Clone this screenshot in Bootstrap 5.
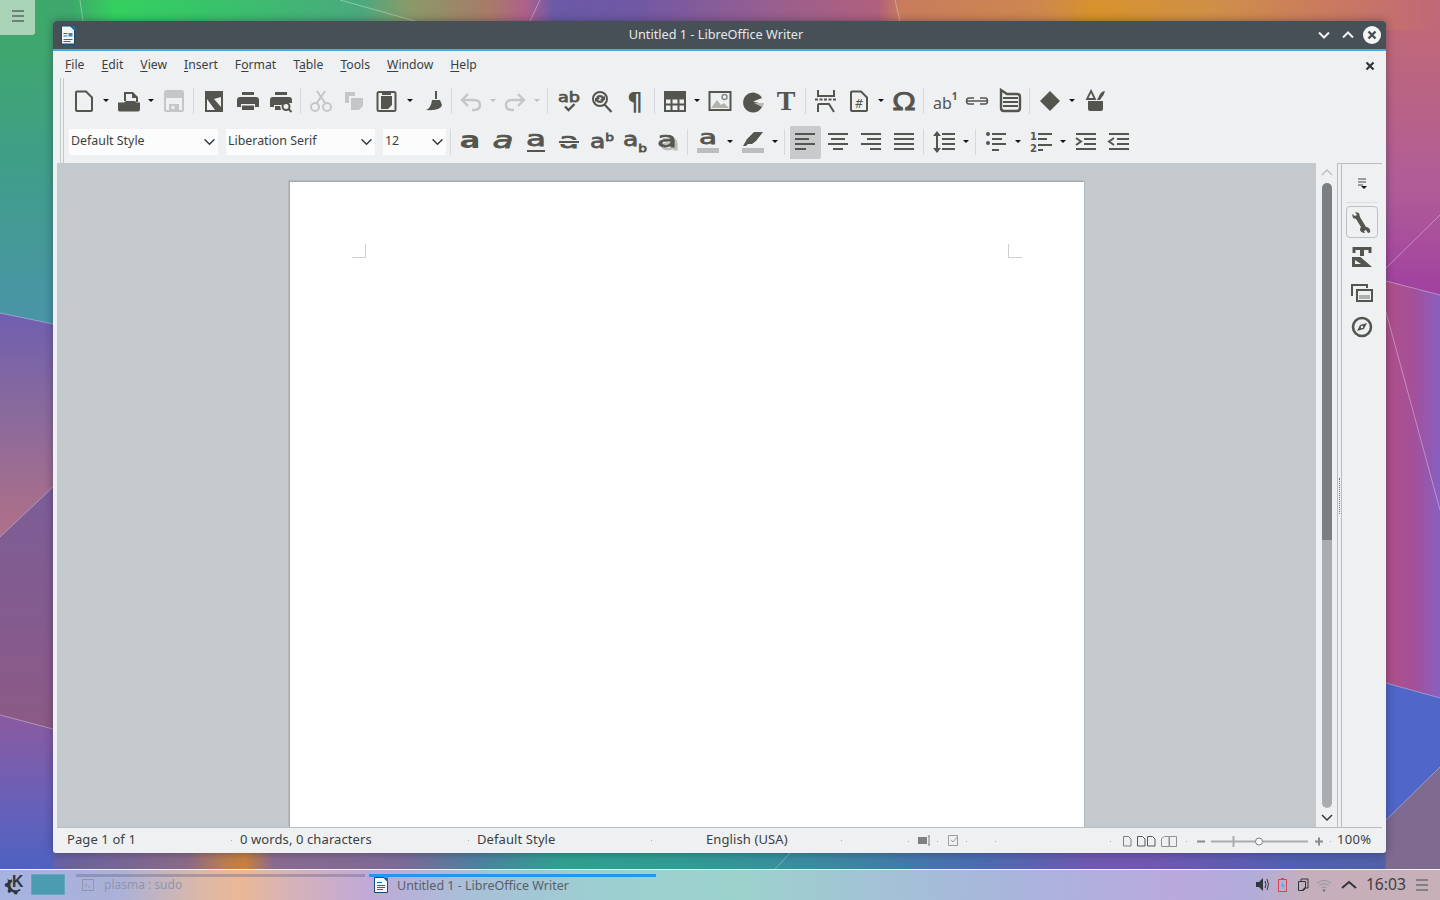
<!DOCTYPE html>
<html lang="en">
<head>
<meta charset="utf-8">
<title>Untitled 1 - LibreOffice Writer</title>
<link rel="stylesheet" href="https://cdn.jsdelivr.net/npm/bootstrap@5.3.0/dist/css/bootstrap.min.css">
<style>
html,body{margin:0;width:1440px;height:900px;overflow:hidden}
body{font-family:"Noto Sans","Open Sans",sans-serif;font-size:13px;color:#3a3f44;line-height:1.2;background:#6a60a0}
.desk{height:869px}
.wall{width:1440px;height:869px}
.side-tab{width:35px;height:35px;background:#a9d4b7;border-bottom-right-radius:3px;padding:10px 11px 0 12px;gap:3px}
.side-tab span{height:2px;background:#6f8078;display:block}
.lo-win{left:53px;top:21px;width:1333px;height:832px;background:#eff0f1;border-radius:3px;box-shadow:0 0 9px rgba(30,30,50,.45);overflow:hidden}
.titlebar{height:30px;background:#474f57;border-bottom:2px solid #3daee9;color:#e6e8e9;flex:none;font-size:12.7px}
.t-left{width:67px;padding-left:6px}
.t-right{width:74px}
.menu{height:27px;padding:2px 0 0 12px;gap:17px;flex:none;font-size:12.2px}
.menu span{color:#3a3f44}
.menu u{text-underline-offset:2px;text-decoration-thickness:1px}
.doc-x{margin-left:auto;margin-right:11px}
.tools{margin-left:7px;height:85px;flex:none;border-left:4px double #c6c8ca}
.r1{height:46px;padding-left:3px}
.r2{height:36px;padding-left:5px}
.b{width:33px;height:33px;flex:none}
.i{width:24px;height:24px;display:block;color:#55554f;fill:currentColor;overflow:visible}
.off{color:#c4c6c7}
.d{width:12px;height:10px;flex:none;padding-top:3px}
.d::after{content:"";width:0;height:0;margin:0 auto;border:3px solid transparent;border-top-color:#111;border-bottom:0;display:block}
.d.off::after{border-top-color:#bfc1c2}
.d11{width:11px}.d13{width:13px}
.s{width:7px;height:26px;flex:none}
.s::after{content:"";width:1px;height:100%;background:#d6d8d9;display:block}
.s5{width:5px}.s9{width:9px}
.g1{margin-left:1px}
.active-b{background:#c8cacc;background-clip:padding-box;border-left:2px solid transparent;border-radius:2px;padding-right:1px}
select.form-select.cb{height:26px;border:0;border-radius:0;background-color:#fcfcfc;padding:0 20px 1px 2px;font-size:12.4px;color:#3a3f44;background-position:right 1px center;background-size:15px 12px;box-shadow:none;flex:none;font-family:"Noto Sans",sans-serif}
.cb-l{width:149px;margin-right:8px}
.cb-s{width:63px;margin-right:4px}
.sep-a{width:1px;height:26px;background:#d6d8d9;margin-right:2px;flex:none}
.main{margin:0 4px 0 4px;min-height:0}
.area{background:#c3c9cd;padding-top:18px;overflow:hidden;min-width:0}
.page{width:795px;background:#fff;border:solid #a5aaad;border-width:1px 0 0 1px;box-shadow:-1px -1px 0 #b4b9bc,1px 0 0 #b4b9bc;padding:62px 62px 0 62px}
.pgm{width:14px;height:14px;border:0 solid #cfcfcf}
.pgm-l{border-width:0 1px 1px 0}
.pgm-r{border-width:0 0 1px 1px}
.vscroll{width:21px;padding-top:6px;flex:none}
.thumb{width:10px;height:357px;background:#7a7f84;border-radius:5px 5px 0 0;flex:none}
.groove{width:10px;background:#a9adb0;border-radius:0 0 5px 5px;flex:1 1 auto;min-height:0}
.sidebar{width:45px;border-top:1px solid #b9bdc0;border-left:1px solid #b9bdc0;flex:none}
.grip{width:4px;border-right:1px solid #b9bdc0;flex:none}
.grip span{display:block;height:36px;border-left:1px dotted #6f7477;margin-left:1px}
.tabs{padding-top:3px;width:40px}
.tb{width:32px;height:32px;flex:none;margin-bottom:3px}
.tb-on{border:1px solid #bcc0c2;border-radius:4px}
.tb-sep{width:32px;border-top:1px solid #dcdee0;margin:3px 0}
.status{height:26px;flex:none;margin:0 4px;border-top:1px solid #b9bdc0;padding-left:10px}
.f{flex:none}
.f1{width:165px;margin-right:8px}.f2{width:229px;margin-right:8px}.f3{width:175px;margin-right:54px}.f4{width:136px;margin-right:66px}
.f span{letter-spacing:.1px;margin-bottom:2px}
.f em{width:1px;height:1px;background:#a8acae;display:block}
.zoomtxt{margin:0 0 2px 2px;letter-spacing:.3px}
.panel{height:31px;border-top:1px solid #f6f3f6;background:linear-gradient(90deg,#a6b3e0 0,#abb1d8 120px,#dcb8a8 200px,#eab896 240px,#d6b3b8 290px,#bfa9d8 370px,#a8c0d8 470px,#9bd0d0 620px,#9cd2cc 740px,#a3c2d6 880px,#a8b6dc 1000px,#b9a9dc 1170px,#b2acda 1250px,#c6afbb 1310px,#c8b0b8 1440px);padding-left:4px}
.kde{width:21px;height:21px;margin-right:6px;display:block;flex:none}
.kde,.tray{color:#31363b;fill:currentColor}
.pager{width:34px;height:21px;background:#4b9cb0;border:1px solid #62a9bb;margin-right:11px;flex:none}
.task{height:30px;width:289px;padding-top:1px;flex:none;position:relative}
.task::before{content:"";display:block;height:3px;margin-top:3px;background:rgba(110,105,140,.42)}
.task-on::before{background:#2196f3}
.task-1{margin-right:4px;width:289px;color:#8f97ab;font-size:12px}
.task-2{width:287px;color:#596067;font-size:12.5px}
.task-body{height:16px;gap:7px}
.task-1 .task-body{padding-left:6px;gap:10px}
.task-1 .task-body span{padding-top:1px}
.task-2 .task-body{padding-left:5px;gap:9px}
.clock{font-size:15.7px;color:#3a3f44;margin:0 10px 0 5px;line-height:1}
.tray{display:block;flex:none}
.tray-end{margin-right:12px}
.rt{font-family:"DejaVu Sans",sans-serif;font-weight:700;fill:currentColor}
.rm{font-family:"DejaVu Sans",sans-serif;font-weight:400;fill:currentColor;stroke:currentColor;stroke-width:.75}
.rn{font-family:"Noto Sans",sans-serif;fill:currentColor}
.shd{filter:drop-shadow(3px 3px 0 #bcbdbb)}
</style>
</head>
<body class="d-flex flex-column">
<div class="desk position-relative overflow-hidden flex-shrink-0">
  <svg class="wall position-absolute top-0 start-0" viewBox="0 0 1440 869" aria-hidden="true">
    <defs>
      <linearGradient id="gt" gradientUnits="userSpaceOnUse" x1="0" y1="0" x2="1440" y2="0">
        <stop offset="0" stop-color="#3fa86c"/><stop offset=".05" stop-color="#3ea86c"/><stop offset=".08" stop-color="#35d05f"/><stop offset=".14" stop-color="#38c468"/><stop offset=".25" stop-color="#4aa97e"/><stop offset=".285" stop-color="#8a9a68"/><stop offset=".34" stop-color="#a87a68"/><stop offset=".365" stop-color="#b0608a"/><stop offset=".385" stop-color="#6a5aa8"/><stop offset=".44" stop-color="#7058a4"/><stop offset=".54" stop-color="#9a5f8e"/><stop offset=".61" stop-color="#b0607c"/><stop offset=".625" stop-color="#c87c5c"/><stop offset=".72" stop-color="#cd8750"/><stop offset=".76" stop-color="#d8922c"/><stop offset=".84" stop-color="#cf9048"/><stop offset=".91" stop-color="#cb7d5c"/><stop offset="1" stop-color="#c06878"/>
      </linearGradient>
      <linearGradient id="l1" x1="0" y1="0" x2="0" y2="1"><stop offset="0" stop-color="#3fa86c"/><stop offset=".45" stop-color="#3f9e88"/><stop offset="1" stop-color="#4a94a8"/></linearGradient>
      <linearGradient id="l2" x1="0" y1="0" x2="0" y2="1"><stop offset="0" stop-color="#6f5fb0"/><stop offset=".45" stop-color="#8a6a9c"/><stop offset="1" stop-color="#b07088"/></linearGradient>
      <linearGradient id="l3" x1="0" y1="0" x2="0" y2="1"><stop offset="0" stop-color="#7c5e98"/><stop offset="1" stop-color="#8c5a86"/></linearGradient>
      <linearGradient id="l4" x1="0" y1="0" x2="0" y2="1"><stop offset="0" stop-color="#8a5aa0"/><stop offset=".55" stop-color="#6a60b8"/><stop offset="1" stop-color="#4e62c0"/></linearGradient>
      <linearGradient id="r1" x1="0" y1="0" x2="0" y2="1"><stop offset="0" stop-color="#c06878"/><stop offset=".6" stop-color="#b05c98"/><stop offset="1" stop-color="#a040a0"/></linearGradient>
      <linearGradient id="r2" x1="0" y1="0" x2="1" y2="0"><stop offset="0" stop-color="#b0508a"/><stop offset=".5" stop-color="#a45098"/><stop offset="1" stop-color="#8860c0"/></linearGradient>
      <linearGradient id="gb" gradientUnits="userSpaceOnUse" x1="0" y1="0" x2="1440" y2="0">
        <stop offset="0" stop-color="#5060b8"/><stop offset=".05" stop-color="#6a62a0"/><stop offset=".13" stop-color="#8a6a88"/><stop offset=".155" stop-color="#b87c54"/><stop offset=".17" stop-color="#c8803c"/><stop offset=".19" stop-color="#8a6a90"/><stop offset=".28" stop-color="#7c6a98"/><stop offset=".33" stop-color="#4e80a0"/><stop offset=".39" stop-color="#30a090"/><stop offset=".47" stop-color="#309c94"/><stop offset=".56" stop-color="#3a8ca0"/><stop offset=".68" stop-color="#4a6cb0"/><stop offset=".76" stop-color="#7058b0"/><stop offset=".8" stop-color="#7058b0"/><stop offset=".9" stop-color="#5060b0"/><stop offset=".96" stop-color="#5060a8"/><stop offset=".97" stop-color="#80688a"/><stop offset="1" stop-color="#8a6a90"/>
      </linearGradient>
    </defs>
    <rect width="1440" height="60" fill="url(#gt)"/>
    <rect y="820" width="1440" height="49" fill="url(#gb)"/>
    <polygon points="0,30 53,30 53,324 0,313" fill="url(#l1)"/>
    <polygon points="0,313 53,324 53,487 0,537" fill="url(#l2)"/>
    <polygon points="0,537 53,487 53,729 0,715" fill="url(#l3)"/>
    <polygon points="0,715 53,729 53,869 0,869" fill="url(#l4)"/>
    <polygon points="1386,30 1440,30 1440,295 1386,281" fill="url(#r1)"/>
    <polygon points="1386,281 1440,295 1440,698 1386,683" fill="url(#r2)"/>
    <polygon points="1386,683 1440,698 1440,767 1386,820" fill="#5066c8"/>
    <polygon points="1386,820 1440,767 1440,869 1386,869" fill="#7f6a90"/>
    <g stroke="#fff" stroke-opacity=".35" fill="none">
      <path d="M0 313 53 324M0 537 53 487M0 715 53 729M1386 268 1440 215M1386 281 1440 295M1386 312 1440 510M1386 683 1440 698M1386 820 1440 767M340 0 415 21M80 0 83 21M895 0 900 21M530 21 540 0M790 853 775 869"/>
    </g>
  </svg>

  <div class="side-tab position-absolute top-0 start-0 d-flex flex-column"><span></span><span></span><span></span></div>

  <div class="lo-win position-absolute d-flex flex-column">
    <div class="titlebar d-flex align-items-center">
      <div class="t-left">
        <svg class="d-block" width="18" height="20" viewBox="0 0 18 20" aria-hidden="true"><path d="M2.5 1h9l4 4v14h-13z" fill="#f2f6f8" stroke="#124c72"/><path d="M11 1h5v5z" fill="#1b6a9c"/><path d="M4.500 8h4v1h-4zM4.500 10.500h4v1h-4zM4.500 14h9v1h-9zM4.500 16h7v1h-7z" fill="#1f6fa5"/><rect x="9.500" y="8" width="4" height="3.500" fill="#5d7d90"/></svg>
      </div>
      <div class="flex-grow-1 text-center">Untitled 1 - LibreOffice Writer</div>
      <div class="t-right d-flex align-items-center">
        <svg width="74" height="22" viewBox="-1 0 74 22" aria-hidden="true"><path d="M6 8.500 11 13.500 16 8.500" fill="none" stroke="#eff0f1" stroke-width="2"/><path d="M30 13.500 35 8.500 40 13.500" fill="none" stroke="#eff0f1" stroke-width="2"/><circle cx="59" cy="11" r="9" fill="#f4f5f5"/><path d="M55.500 7.500l7 7M62.500 7.500l-7 7" stroke="#474f57" stroke-width="2.400"/></svg>
      </div>
    </div>

    <div class="menu d-flex align-items-center">
      <span><u>F</u>ile</span><span><u>E</u>dit</span><span><u>V</u>iew</span><span><u>I</u>nsert</span><span>F<u>o</u>rmat</span><span>T<u>a</u>ble</span><span><u>T</u>ools</span><span><u>W</u>indow</span><span><u>H</u>elp</span>
      <svg class="doc-x" width="10" height="10" viewBox="0 0 10 10" aria-hidden="true"><path d="M1.500 1.500l7 7M8.500 1.500l-7 7" stroke="#31363b" stroke-width="2.200"/></svg>
    </div>

    <div class="tools">
      <div class="r1 d-flex align-items-center">
        <div class="b d-flex align-items-center justify-content-center"><svg class="i" viewBox="0 0 24 24"><path d="M4 3.500q0-1 1-1h9l6 6V21q0 1-1 1H5q-1 0-1-1z" fill="none" stroke="currentColor" stroke-width="2"/></svg></div>
        <div class="d"></div>
        <div class="b d-flex align-items-center justify-content-center"><svg class="i" viewBox="0 0 24 24"><path d="M7 12V3h9l5 5v5h-2V9h-4V5H9v7z"/><path d="M1 21V13.500h6l2-1.500h9l1.500 1.500H23V20q0 2.500-2 2.500H3Q1 22.500 1 21z"/></svg></div>
        <div class="d"></div>
        <div class="b d-flex align-items-center justify-content-center"><svg class="i off" viewBox="0 0 24 24"><path d="M3 3.500q0-1.500 1.500-1.500h15q1.500 0 1.500 1.500v17q0 1.500-1.500 1.500h-15Q3 22 3 20.500z" fill="none" stroke="currentColor" stroke-width="2"/><path d="M4 3h16v6H4zM7 15h10v7H7z"/><rect x="9.500" y="17" width="3" height="3" fill="#eff0f1"/></svg></div>
        <div class="s d-flex justify-content-center"></div>
        <div class="b d-flex align-items-center justify-content-center"><svg class="i" viewBox="0 0 24 24"><rect x="4" y="3" width="16" height="19" fill="none" stroke="currentColor" stroke-width="2"/><path d="M5 4h14v4L12 10l7 8v3h-6L5 10z"/></svg></div>
        <div class="b g1 d-flex align-items-center justify-content-center"><svg class="i" viewBox="0 0 24 24"><path d="M6 3h12v3H6zM1 11q0-3 3-3h16q3 0 3 3v7h-4v-3H5v3H1zM6 16.500h12V21H6z"/></svg></div>
        <div class="b d-flex align-items-center justify-content-center"><svg class="i" viewBox="0 0 24 24"><path d="M6 3h12v3H6zM1 11q0-3 3-3h16q3 0 3 3v3h-7l-4 2H5v2H1zM6 17h5l1 4H6z"/><circle cx="17" cy="17.500" r="3.500" fill="none" stroke="currentColor" stroke-width="2"/><path d="M19.500 20l3 3" stroke="currentColor" stroke-width="2"/></svg></div>
        <div class="s d-flex justify-content-center"></div>
        <div class="b d-flex align-items-center justify-content-center"><svg class="i off" viewBox="0 0 24 24"><circle cx="6" cy="18" r="4" fill="none" stroke="currentColor" stroke-width="2"/><circle cx="18" cy="18" r="4" fill="none" stroke="currentColor" stroke-width="2"/><path d="M7.500 14.500 16 2M16.500 14.500 8 2" stroke="currentColor" stroke-width="2" fill="none"/></svg></div>
        <div class="b d-flex align-items-center justify-content-center"><svg class="i off" viewBox="0 0 24 24"><path d="M3 3h10v4H7v7H3zM9 9h12v8l-4 4H9z"/></svg></div>
        <div class="b d-flex align-items-center justify-content-center"><svg class="i" viewBox="0 0 24 24"><path d="M7 3H4Q2.500 3 2.500 4.500v16Q2.500 22 4 22h15q1.500 0 1.500-1.500v-16Q20.500 3 19 3h-3" fill="none" stroke="currentColor" stroke-width="2"/><path d="M7 2h9v4H7zM6 7h11v9l-4 4H6z"/></svg></div>
        <div class="d d13"></div>
        <div class="b d-flex align-items-center justify-content-center"><svg class="i" viewBox="0 0 24 24"><path d="M14 2h2v8h-2zM11 11h8l2 5q-1 6-16 5 5-2 6-10z"/></svg></div>
        <div class="s s5 d-flex justify-content-center"></div>
        <div class="b d-flex align-items-center justify-content-center"><svg class="i off" viewBox="0 0 24 24"><path d="M9 5 3 11l6 6M3 11h12q6 0 6 5t-6 5h-2" fill="none" stroke="currentColor" stroke-width="2.400"/></svg></div>
        <div class="d d11 off"></div>
        <div class="b d-flex align-items-center justify-content-center"><svg class="i off" viewBox="0 0 24 24"><path d="M15 5l6 6-6 6M21 11H9q-6 0-6 5t6 5h2" fill="none" stroke="currentColor" stroke-width="2.400"/></svg></div>
        <div class="d off"></div>
        <div class="s s9 d-flex justify-content-center"></div>
        <div class="b d-flex align-items-center justify-content-center"><svg class="i" viewBox="0 0 24 24"><text class="rm" x="1" y="13" font-size="14" textLength="22" lengthAdjust="spacingAndGlyphs">ab</text><path d="M8 17.500l3.500 3.500 6-6" fill="none" stroke="currentColor" stroke-width="2.400"/></svg></div>
        <div class="b d-flex align-items-center justify-content-center"><svg class="i" viewBox="0 0 24 24"><circle cx="10" cy="10" r="7" fill="none" stroke="currentColor" stroke-width="2"/><path d="M14.500 15.500l7 7.500" stroke="currentColor" stroke-width="2.200"/><path d="M6 10q0-4 4-4 3 0 4 2l1-2v5h-5l2-2q-3-2-4 1zM14 10q0 4-4 4-3 0-4-2l-1 2V9h5l-2 2q3 2 4-1z"/></svg></div>
        <div class="b d-flex align-items-center justify-content-center"><svg class="i" viewBox="0 0 24 24"><text class="rt" x="12" y="21" font-size="24" text-anchor="middle">¶</text></svg></div>
        <div class="s d-flex justify-content-center"></div>
        <div class="b d-flex align-items-center justify-content-center"><svg class="i" viewBox="0 0 24 24"><path d="M2 3h20v19H2z" fill="none" stroke="currentColor" stroke-width="2"/><path d="M2 3h20v6H2z"/><path d="M8.500 3v19M15.500 3v19M2 9.500h20M2 15.500h20" stroke="currentColor" stroke-width="2"/></svg></div>
        <div class="d"></div>
        <div class="b d-flex align-items-center justify-content-center"><svg class="i" viewBox="0 0 24 24"><rect x="1.500" y="3" width="21" height="18" fill="none" stroke="currentColor" stroke-width="2"/><circle cx="16.500" cy="8" r="2.500" fill="none" stroke="#8b8b86" stroke-width="1.500"/><path d="M3 19l6-8 4 5 3-2 5 5z" fill="#b2b3af"/></svg></div>
        <div class="b d-flex align-items-center justify-content-center"><svg class="i" viewBox="0 0 24 24"><path d="M21 9A10 10 0 1 0 22 15l-10-2.500z"/><path d="M13 14l10 0q0 2-2 4z" fill="#b8b9b6"/></svg></div>
        <div class="b d-flex align-items-center justify-content-center"><svg class="i" viewBox="0 0 24 24"><text x="12" y="21" font-size="28" font-weight="700" text-anchor="middle" font-family="Liberation Serif,serif" fill="currentColor">T</text></svg></div>
        <div class="s d-flex justify-content-center"></div>
        <div class="b d-flex align-items-center justify-content-center"><svg class="i" viewBox="0 0 24 24"><path d="M4 1v6h16V1M4 23v-7q0-1 1-1h10l5 8" fill="none" stroke="currentColor" stroke-width="2"/><path d="M1 10.500h22" stroke="currentColor" stroke-width="2" stroke-dasharray="3 1.500"/></svg></div>
        <div class="b d-flex align-items-center justify-content-center"><svg class="i" viewBox="0 0 24 24"><path d="M4 3.500q0-1 1-1h9l6 6V21q0 1-1 1H5q-1 0-1-1z" fill="none" stroke="currentColor" stroke-width="2"/><text class="rn" x="12" y="19" font-size="12" text-anchor="middle" font-style="italic">#</text></svg></div>
        <div class="d"></div>
        <div class="b d-flex align-items-center justify-content-center"><svg class="i" viewBox="0 0 24 24"><text class="rm" x="12" y="21" font-size="24" text-anchor="middle" textLength="23" lengthAdjust="spacingAndGlyphs">Ω</text></svg></div>
        <div class="s d-flex justify-content-center"></div>
        <div class="b d-flex align-items-center justify-content-center"><svg class="i" viewBox="0 0 24 24"><text class="rn" x="1" y="20" font-size="16">ab<tspan dy="-9" font-size="10" font-weight="700">1</tspan></text></svg></div>
        <div class="b d-flex align-items-center justify-content-center"><svg class="i" viewBox="0 0 24 24"><path d="M9 9H4q-2.500 0-2.500 3T4 15h5M15 9h5q2.500 0 2.500 3T20 15h-5M1 12h22" fill="none" stroke="currentColor" stroke-width="1.500"/></svg></div>
        <div class="b d-flex align-items-center justify-content-center"><svg class="i" viewBox="0 0 24 24"><path d="M3 1l6 4h10q3 0 3 3v11q0 3-3 3H6q-3 0-3-3z" fill="none" stroke="currentColor" stroke-width="2.400"/><path d="M5 9h15M5 13h15M5 17h15" stroke="currentColor" stroke-width="2"/></svg></div>
        <div class="s d-flex justify-content-center"></div>
        <div class="b d-flex align-items-center justify-content-center"><svg class="i" viewBox="0 0 24 24"><path d="M12 2l10 10-10 10L2 12z"/></svg></div>
        <div class="d"></div>
        <div class="b d-flex align-items-center justify-content-center"><svg class="i" viewBox="0 0 24 24"><path d="M5 12h15v8q0 2-2 2H7q-2 0-2-2z"/><path d="M8 2l4 8H4z" fill="none" stroke="currentColor" stroke-width="1.800"/><path d="M14 11l3-6q2-3 5-3-1 4-3 6l-2 3z"/></svg></div>
      </div>

      <div class="r2 d-flex align-items-center">
        <select class="form-select cb cb-l" aria-label="Paragraph style"><option>Default Style</option></select>
        <select class="form-select cb cb-l" aria-label="Font"><option>Liberation Serif</option></select>
        <select class="form-select cb cb-s" aria-label="Font size"><option>12</option></select>
        <div class="sep-a"></div>
        <div class="b d-flex align-items-center justify-content-center"><svg class="i" viewBox="0 0 24 24"><text class="rt" x="1.500" y="18" font-size="23" textLength="21" lengthAdjust="spacingAndGlyphs">a</text></svg></div>
        <div class="b d-flex align-items-center justify-content-center"><svg class="i" viewBox="0 0 24 24"><text class="rm" x="1.500" y="18" font-size="23" font-style="italic" textLength="21" lengthAdjust="spacingAndGlyphs">a</text></svg></div>
        <div class="b d-flex align-items-center justify-content-center"><svg class="i" viewBox="0 0 24 24"><text class="rm" x="2" y="16" font-size="22" textLength="20" lengthAdjust="spacingAndGlyphs">a</text><path d="M3 21h18" stroke="currentColor" stroke-width="2"/></svg></div>
        <div class="b d-flex align-items-center justify-content-center"><svg class="i" viewBox="0 0 24 24"><text class="rm" x="2" y="18" font-size="22" textLength="20" lengthAdjust="spacingAndGlyphs">a</text><path d="M2 12h20" stroke="#eff0f1" stroke-width="4"/><path d="M2 12h20" stroke="currentColor" stroke-width="2"/></svg></div>
        <div class="b d-flex align-items-center justify-content-center"><svg class="i" viewBox="0 0 24 24"><text class="rm" transform="scale(1.25 1)" x="0" y="18" font-size="20">a<tspan dy="-7" font-size="11">b</tspan></text></svg></div>
        <div class="b d-flex align-items-center justify-content-center"><svg class="i" viewBox="0 0 24 24"><text class="rm" transform="scale(1.25 1)" x="0" y="16" font-size="20">a<tspan dy="6" font-size="11">b</tspan></text></svg></div>
        <div class="b d-flex align-items-center justify-content-center"><svg class="i shd" viewBox="0 0 24 24"><text class="rm" x="1" y="17" font-size="22" textLength="20" lengthAdjust="spacingAndGlyphs">a</text></svg></div>
        <div class="s d-flex justify-content-center"></div>
        <div class="b d-flex align-items-center justify-content-center"><svg class="i" viewBox="0 0 24 24"><text class="rm" x="3" y="14" font-size="19" textLength="18" lengthAdjust="spacingAndGlyphs">a</text><rect x="1" y="18" width="22" height="5" fill="#bbbdbe"/></svg></div>
        <div class="d"></div>
        <div class="b d-flex align-items-center justify-content-center"><svg class="i" viewBox="0 0 24 24"><path d="M6 9l7-7h9l-7 9-4 3H7l-2 2H2z"/><rect x="1" y="18" width="22" height="5" fill="#bbbdbe"/></svg></div>
        <div class="d"></div>
        <div class="s d-flex justify-content-center"></div>
        <div class="b active-b d-flex align-items-center justify-content-center"><svg class="i" viewBox="0 0 24 24"><path d="M2 4h20M2 9h14M2 14h20M2 19h11" stroke="currentColor" stroke-width="2"/></svg></div>
        <div class="b d-flex align-items-center justify-content-center"><svg class="i" viewBox="0 0 24 24"><path d="M2 4h20M5 9h14M2 14h20M7 19h10" stroke="currentColor" stroke-width="2"/></svg></div>
        <div class="b d-flex align-items-center justify-content-center"><svg class="i" viewBox="0 0 24 24"><path d="M2 4h20M8 9h14M2 14h20M11 19h11" stroke="currentColor" stroke-width="2"/></svg></div>
        <div class="b d-flex align-items-center justify-content-center"><svg class="i" viewBox="0 0 24 24"><path d="M2 4h20M2 9h20M2 14h20M2 19h20" stroke="currentColor" stroke-width="2"/></svg></div>
        <div class="s d-flex justify-content-center"></div>
        <div class="b d-flex align-items-center justify-content-center"><svg class="i" viewBox="0 0 24 24"><path d="M5 3v18" stroke="currentColor" stroke-width="2"/><path d="M1 6l4-5 4 5zM1 18l4 5 4-5z"/><path d="M10 4h13M10 9h13M10 14h13M10 19h13" stroke="currentColor" stroke-width="2"/></svg></div>
        <div class="d"></div>
        <div class="s d-flex justify-content-center"></div>
        <div class="b d-flex align-items-center justify-content-center"><svg class="i" viewBox="0 0 24 24"><circle cx="4" cy="4" r="2"/><circle cx="4" cy="13" r="2"/><path d="M8 4h14M8 9h10M8 14h14M8 20h7" stroke="currentColor" stroke-width="2"/></svg></div>
        <div class="d"></div>
        <div class="b d-flex align-items-center justify-content-center"><svg class="i" viewBox="0 0 24 24"><text class="rt" x="1" y="22" font-size="10">2<tspan x="1" dy="-12">1</tspan></text><path d="M9 4h14M9 9h9M9 15h14M9 20h5" stroke="currentColor" stroke-width="2"/></svg></div>
        <div class="d"></div>
        <div class="b d-flex align-items-center justify-content-center"><svg class="i" viewBox="0 0 24 24"><path d="M2 4h20M10 9h12M10 14h12M2 19h20" stroke="currentColor" stroke-width="2"/><path d="M2 8l5 3.500-5 3.500" fill="none" stroke="currentColor" stroke-width="2"/></svg></div>
        <div class="b d-flex align-items-center justify-content-center"><svg class="i" viewBox="0 0 24 24"><path d="M2 4h20M10 9h12M10 14h12M2 19h20" stroke="currentColor" stroke-width="2"/><path d="M7 8l-5 3.500 5 3.500" fill="none" stroke="currentColor" stroke-width="2"/></svg></div>
      </div>
    </div>

    <div class="main flex-grow-1 d-flex">
      <div class="area flex-grow-1 d-flex justify-content-center">
        <div class="page d-flex justify-content-between align-items-start">
          <div class="pgm pgm-l"></div>
          <div class="pgm pgm-r"></div>
        </div>
      </div>
      <div class="vscroll d-flex flex-column align-items-center">
        <svg class="flex-shrink-0" width="12" height="14" viewBox="0 0 12 14" aria-hidden="true"><path d="M1 6l5-5 5 5" fill="none" stroke="#bfc2c4" stroke-width="1.500"/></svg>
        <div class="thumb"></div>
        <div class="groove"></div>
        <svg class="flex-shrink-0" width="12" height="19" viewBox="0 0 12 19" aria-hidden="true"><path d="M1 7l5 5 5-5" fill="none" stroke="#31363b" stroke-width="1.500"/></svg>
      </div>
      <div class="sidebar d-flex">
        <div class="grip d-flex align-items-center"><span></span></div>
        <div class="tabs d-flex flex-column align-items-center">
          <div class="tb d-flex align-items-center justify-content-center mb-0"><svg width="12" height="12" viewBox="0 0 12 12" aria-hidden="true"><path d="M2 2h8M2 5h8M2 8h5" stroke="#44484c"/><path d="M5 9h6l-3 3z" fill="#111"/></svg></div>
          <div class="tb-sep"></div>
          <div class="tb tb-on d-flex align-items-center justify-content-center"><svg class="i" viewBox="0 0 24 24"><path d="M5 2l4 1 1 4 6 10q3 0 4 3t-2 3l-2-3-2 1 1 2q-4 0-5-3 0-2 1-3L6 9l-3-1-1-4 3 2 2-1z"/></svg></div>
          <div class="tb d-flex align-items-center justify-content-center"><svg class="i" viewBox="0 0 24 24"><path d="M2.500 2h19v6h-3V5H14v6h-4V5H5.500v3h-3z"/><path d="M2 12h8.500L22 22H2zM5 15v4h6z" fill-rule="evenodd"/></svg></div>
          <div class="tb d-flex align-items-center justify-content-center"><svg class="i" viewBox="0 0 24 24"><path d="M2 16V5h15v3" fill="none" stroke="currentColor" stroke-width="2"/><rect x="7" y="10" width="15" height="11" fill="none" stroke="currentColor" stroke-width="2"/><rect x="9" y="15" width="11" height="4" fill="#aeb0ae"/></svg></div>
          <div class="tb d-flex align-items-center justify-content-center"><svg class="i" viewBox="0 0 24 24"><circle cx="12" cy="12" r="9" fill="none" stroke="currentColor" stroke-width="2.600"/><path d="M7 16l3-6 7-2-3 6z"/><circle cx="12" cy="12" r="1.200" fill="#eff0f1"/></svg></div>
        </div>
      </div>
    </div>

    <div class="status d-flex align-items-center">
      <div class="f f1 d-flex align-items-center justify-content-between"><span>Page 1 of 1</span><em></em></div>
      <div class="f f2 d-flex align-items-center justify-content-between"><span>0 words, 0 characters</span><em></em></div>
      <div class="f f3 d-flex align-items-center justify-content-between"><span>Default Style</span><em></em></div>
      <div class="f f4 d-flex align-items-center justify-content-between"><span>English (USA)</span><em></em></div>
      <svg class="flex-shrink-0" width="427" height="20" viewBox="908 830 427 20" aria-hidden="true">
        <g fill="#a8acae"><rect x="908" y="840" width="1" height="1"/><rect x="937" y="840" width="1" height="1"/><rect x="966" y="840" width="1" height="1"/><rect x="995" y="840" width="1" height="1"/><rect x="1110" y="840" width="1" height="1"/><rect x="1186" y="840" width="1" height="1"/><rect x="1330" y="840" width="1" height="1"/></g>
        <rect x="918" y="836" width="9" height="7" fill="#7c8084"/><path d="M928 835h2M929 835v9M928 844h2" stroke="#7c8084" fill="none"/>
        <path d="M948.500 834.500h9v10h-9zM951 839l2 2 5-6" fill="none" stroke="#9a9ea1"/>
        <g fill="none" stroke="#7c8084"><path d="M1123.500 835.500h5l2.500 2.500v7h-7.500z"/><path d="M1137.500 835.500h5l2.500 2.500v7h-7.500zM1147.500 835.500h5l2.500 2.500v7h-7.500z" stroke="#55595c"/><path d="M1161.500 845.500v-8l3-2h4.500v10zM1169.500 835.500h7v10h-7z" stroke="#8d9194"/></g>
        <path d="M1197 840.500h8M1315 840.500h8M1319 836.500v8" stroke="#888c8f" stroke-width="2"/>
        <path d="M1211 840.500h97" stroke="#a9adb0" stroke-width="2"/><path d="M1233.500 835v11" stroke="#a9adb0" stroke-width="2"/>
        <circle cx="1259" cy="840.500" r="3.500" fill="#fcfcfc" stroke="#7c8084"/>
      </svg>
      <span class="zoomtxt">100%</span>
    </div>
  </div>
</div>

<div class="panel d-flex align-items-start flex-shrink-0">
  <svg class="kde mt-1" viewBox="0 0 24 24" aria-hidden="true"><path d="M4 5l2 2 3-1 .5 3-1.500 1a6 6 0 0 0 8 8l2-1 1 2-3 1-1 3h-3l-1-2-3-1-2 2-2-2 1-3-1-2-3-1v-3l3-1 .5-2z"/><text x="9" y="15" font-size="18" font-weight="700" font-family="Liberation Sans,sans-serif">K</text></svg>
  <div class="pager mt-1"></div>
  <div class="task task-1">
    <div class="task-body d-flex align-items-center">
      <svg class="flex-shrink-0" width="12" height="12" viewBox="0 0 12 12" aria-hidden="true"><rect x=".5" y=".5" width="11" height="11" fill="none" stroke="#8f97ab"/><path d="M3 4l2 2-2 2M6 8h2" fill="none" stroke="#8f97ab"/></svg>
      <span>plasma : sudo</span>
    </div>
  </div>
  <div class="task task-2 task-on">
    <div class="task-body d-flex align-items-center">
      <svg class="flex-shrink-0" width="14" height="16" viewBox="0 0 14 16" aria-hidden="true"><path d="M.5.5h9l4 4v11H.500z" fill="#f6f8fa" stroke="#124c72"/><path d="M9 .5h5v5z" fill="#1b6a9c"/><path d="M3 5h5v1H3zM3 8h8v1H3zM3 10h8v1H3zM3 12h6v1H3z" fill="#1f6fa5"/></svg>
      <span>Untitled 1 - LibreOffice Writer</span>
    </div>
  </div>
  <div class="ms-auto d-flex align-items-center align-self-stretch">
    <svg class="tray" width="105" height="18" viewBox="0 0 105 18" aria-hidden="true">
      <path d="M0 6h3l4-4v13l-4-4H0z"/><path d="M9 5q2 3.500 0 7M11 3q3 5.500 0 11" fill="none" stroke="currentColor"/>
      <rect x="22.500" y="3.500" width="8" height="12" fill="none" stroke="#da4453"/><rect x="25" y="2" width="3" height="1.500" fill="#da4453"/><path d="M27 6l-2 4h2l-1 3 3-4h-2z" fill="#3daee9"/>
      <path d="M45 5V3h7v9h-2" fill="none" stroke="currentColor"/><path d="M42.500 5.500h7v7l-2 2h-5z" fill="none" stroke="currentColor"/><path d="M46 14l3-3v3z"/>
      <g fill="none" stroke="#8f94a0"><path d="M61 7q7-5 14 0M63 9.500q5-3.500 10 0M65.500 12q2.500-2 5 0"/></g><circle cx="68" cy="14.500" r="1.200" fill="#6f7480"/>
      <path d="M86 12l7-6 7 6" fill="none" stroke="currentColor" stroke-width="2"/>
    </svg>
    <span class="clock">16:03</span>
    <svg class="tray tray-end" width="12" height="14" viewBox="0 0 12 14" aria-hidden="true"><path d="M0 2h12M0 7h12M0 12h12" stroke="#6b6f78" stroke-width="1.500"/></svg>
  </div>
</div>
<script src="https://cdn.jsdelivr.net/npm/bootstrap@5.3.0/dist/js/bootstrap.bundle.min.js"></script>
</body>
</html>
